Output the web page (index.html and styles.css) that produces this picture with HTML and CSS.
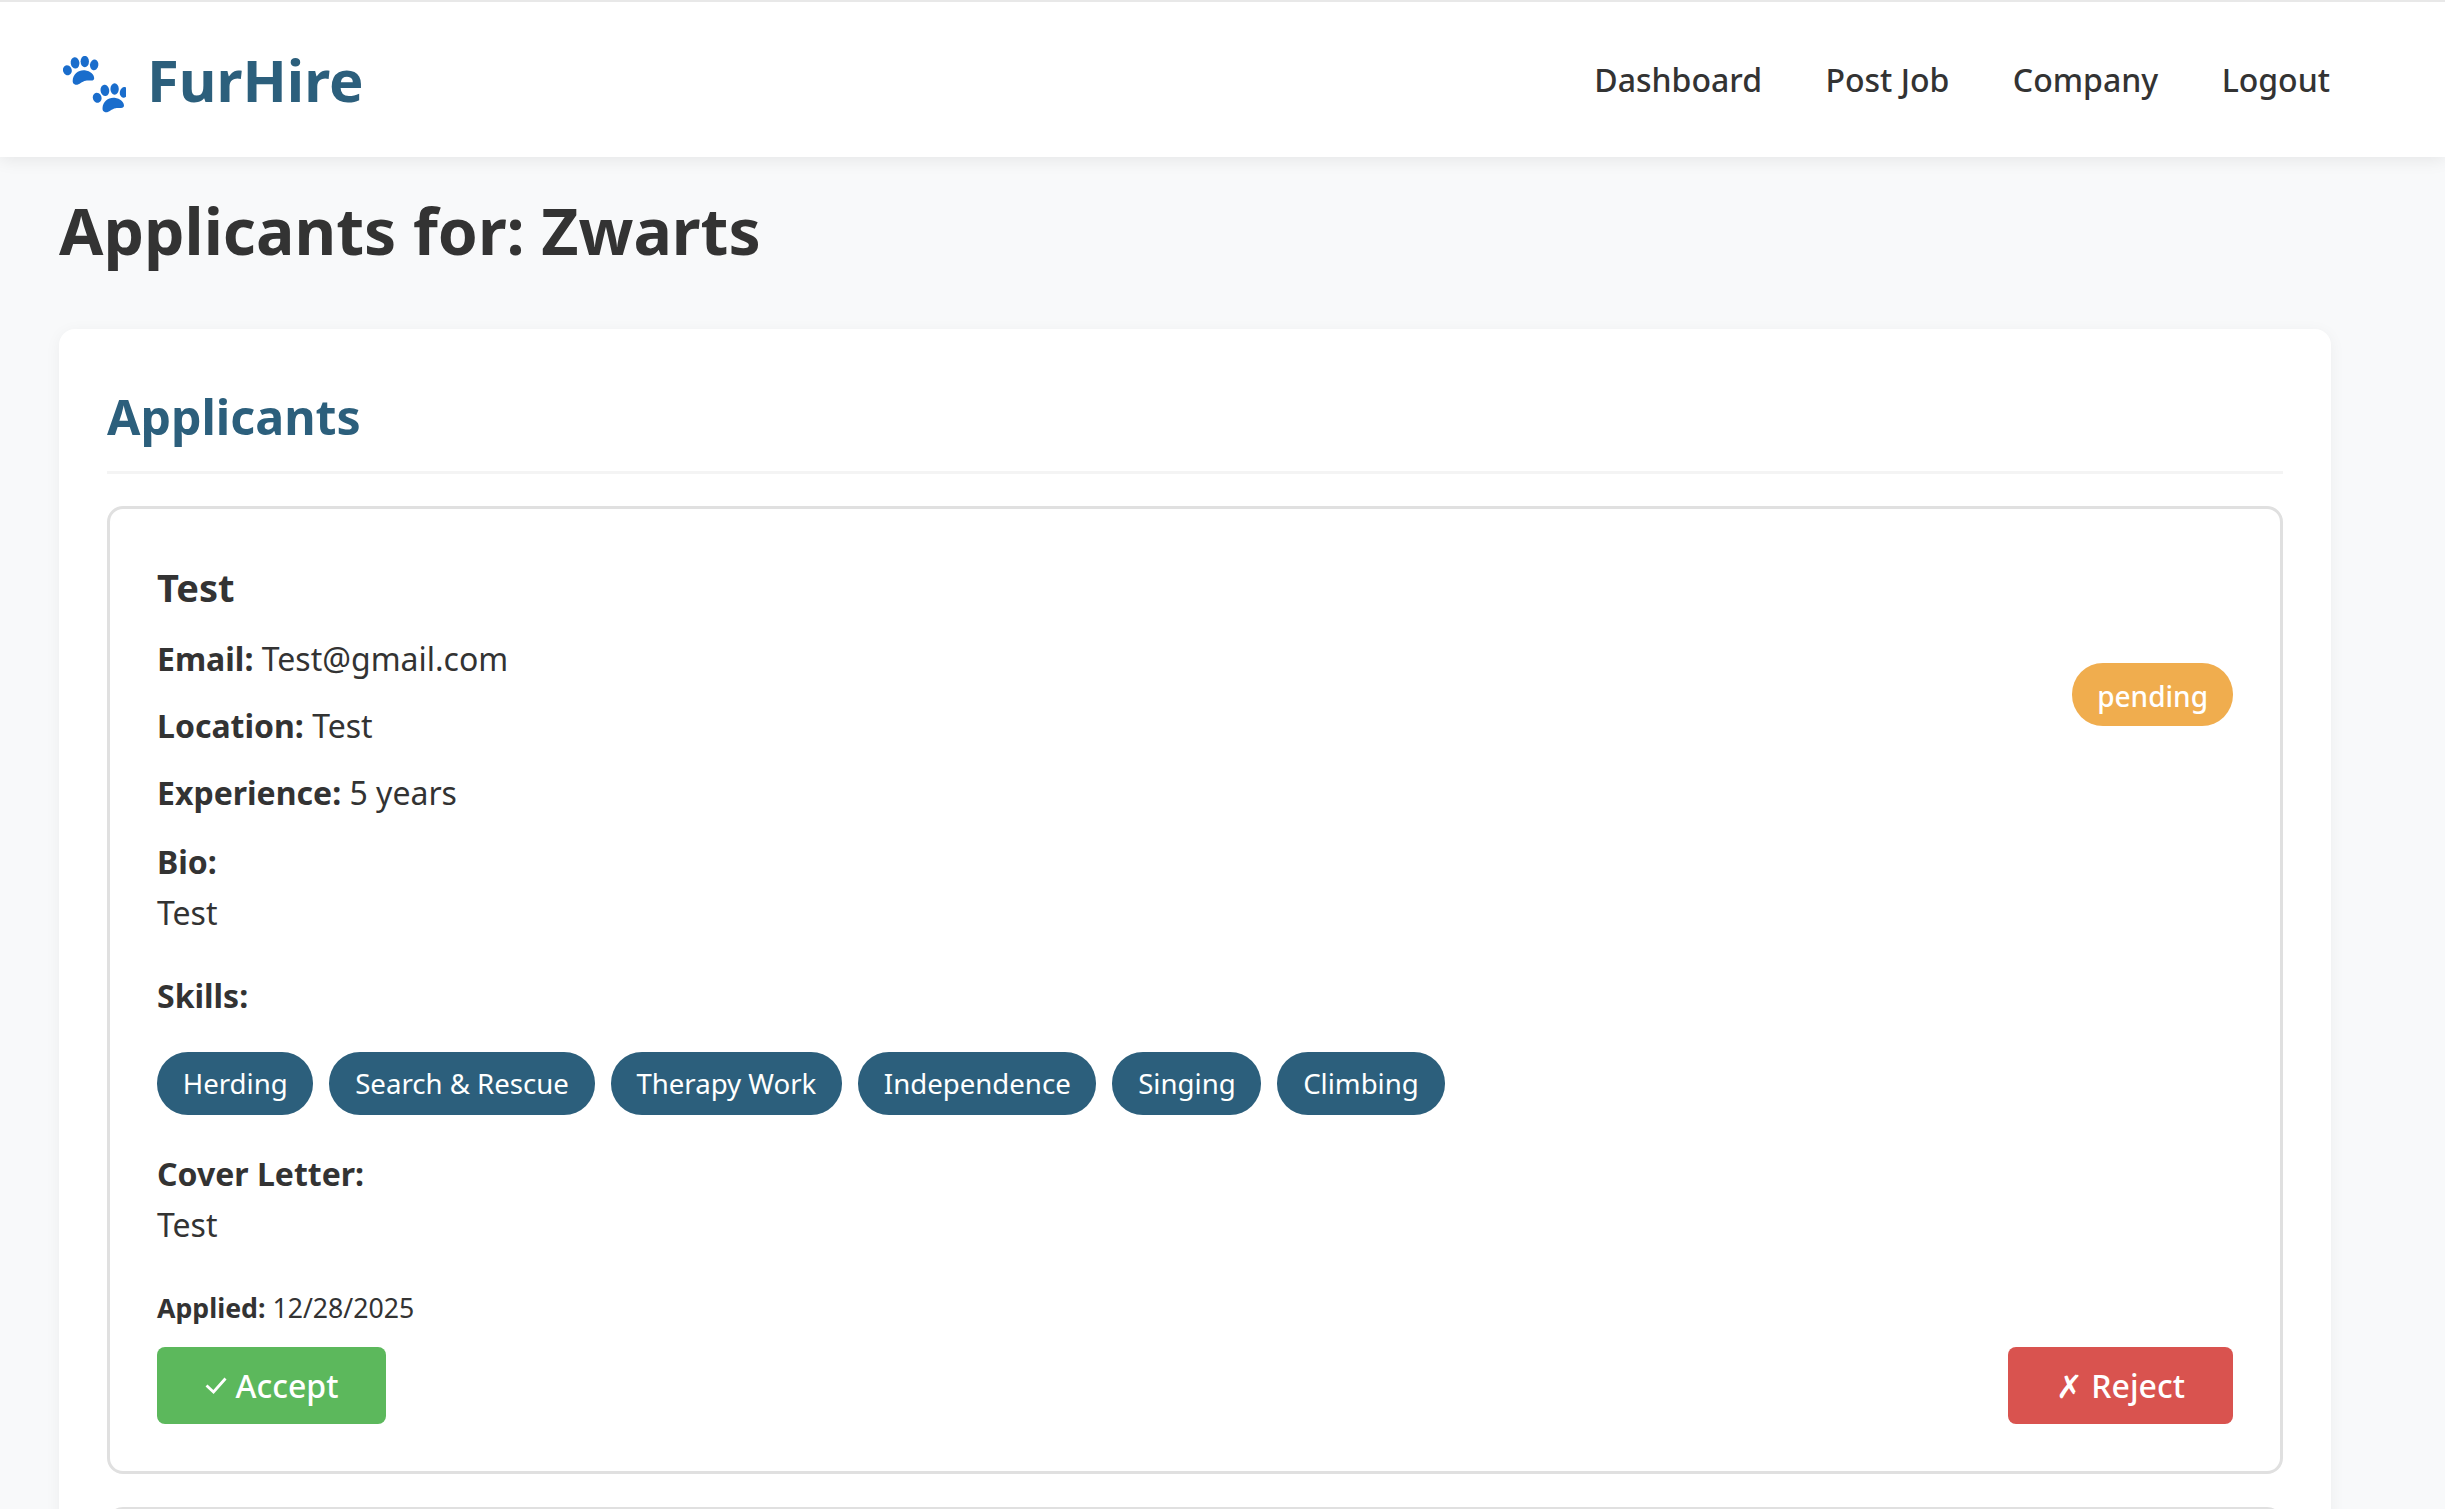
FILE: index.html
```html
<!DOCTYPE html>
<html lang="en">
<head>
<meta charset="utf-8">
<title>FurHire</title>
<link rel="stylesheet" href="styles.css">
</head>
<body>
<header class="site-header">
  <a class="logo" href="#">
    <svg class="logo-icon" viewBox="70 78 188 169" aria-hidden="true">
      <g id="paw">
        <ellipse cx="83" cy="120" rx="13" ry="15" transform="rotate(-20 83 120)"/>
        <ellipse cx="106" cy="98" rx="13" ry="17" transform="rotate(-8 106 98)"/>
        <ellipse cx="135" cy="94" rx="12.500" ry="17"/>
        <ellipse cx="163" cy="104" rx="12.500" ry="16" transform="rotate(10 163 104)"/>
        <path d="M99 150C100 130 118 118 135 120C152 122 164 134 163 145C162 153 148 150 138 151C125 153 118 165 107 163C101 162 98 157 99 150Z"/>
      </g>
      <use href="#paw" x="89" y="82"/>
    </svg>
    <span>FurHire</span>
  </a>
  <nav class="nav">
    <a href="#">Dashboard</a>
    <a href="#">Post Job</a>
    <a href="#">Company</a>
    <a href="#">Logout</a>
  </nav>
</header>
<main class="page">
  <h1 class="page-title">Applicants for: Zwarts</h1>
  <section class="panel">
    <h2 class="panel-title">Applicants</h2>
    <article class="applicant">
      <div class="applicant-top">
        <div>
          <h3 class="applicant-name">Test</h3>
          <p class="line"><strong>Email:</strong> Test@gmail.com</p>
          <p class="line"><strong>Location:</strong> Test</p>
          <p class="line line-last"><strong>Experience:</strong> 5 years</p>
        </div>
        <span class="status">pending</span>
      </div>
      <div class="block">
        <strong class="block-label">Bio:</strong>
        <p class="block-text">Test</p>
      </div>
      <div class="skills">
        <strong class="skills-label">Skills:</strong>
        <div class="tags">
          <span class="tag">Herding</span>
          <span class="tag">Search &amp; Rescue</span>
          <span class="tag">Therapy Work</span>
          <span class="tag">Independence</span>
          <span class="tag">Singing</span>
          <span class="tag">Climbing</span>
        </div>
      </div>
      <div class="block">
        <strong class="block-label">Cover Letter:</strong>
        <p class="block-text">Test</p>
      </div>
      <p class="applied"><strong>Applied:</strong> 12/28/2025</p>
      <div class="actions">
        <button class="btn btn-accept">
          <svg class="check-icon" viewBox="0 0 22 17" aria-hidden="true"><path d="M1.500 8.500L8.500 15L20.500 1.500"/></svg>
          <span>Accept</span>
        </button>
        <button class="btn btn-reject">✗ Reject</button>
      </div>
    </article>
    <article class="applicant applicant-next"></article>
  </section>
</main>
</body>
</html>
```
FILE: styles.css
```css
* { box-sizing: border-box; }
html { font-size: 25px; }
body {
  margin: 0;
  height: 100vh;
  overflow: hidden;
  background: #f8f9fa;
  color: #333;
  font-family: "Noto Sans", sans-serif;
  line-height: 1.7;
}
a { color: inherit; text-decoration: none; }
.site-header {
  height: 157px;
  display: flex;
  align-items: center;
  justify-content: space-between;
  padding: 0 115px 0 59px;
  background: #fff;
  border-top: 2px solid #e8e8e8;
  box-shadow: 0 3px 16px rgba(0, 0, 0, 0.08);
  position: relative;
}
.logo {
  display: flex;
  align-items: center;
  gap: 21px;
  padding-left: 4px;
  color: #2c5f7c;
  font-size: 58px;
  font-weight: 700;
  line-height: 1;
}
.logo-icon { width: 63px; height: 57px; margin-top: 9px; fill: #1a6dcc; }
.nav { display: flex; gap: 63.5px; font-size: 32px; font-weight: 500; line-height: 42px; padding-top: 1px; }
.nav a { color: #333; }
.page { padding: 0 114px 0 59px; }
.page-title {
  margin: 0;
  padding-top: 25px;
  font-size: 64.2px;
  font-weight: 700;
  line-height: 1.5;
}
.panel {
  margin-top: 50.5px;
  padding: 56px 48px 0;
  background: #fff;
  border-radius: 16px;
  box-shadow: 0 3px 16px rgba(0, 0, 0, 0.05);
}
.panel-title {
  margin: 0 0 31.5px;
  padding-bottom: 23.5px;
  border-bottom: 3px solid #f4f4f4;
  color: #2c5f7c;
  font-size: 48.3px;
  font-weight: 700;
  line-height: 1.3;
}
.applicant {
  margin-bottom: 33px;
  padding: 54px 47px 47px;
  border: 3px solid #e0e0e0;
  border-radius: 16px;
}
.applicant-next { height: 200px; }
.applicant-top { display: flex; justify-content: space-between; align-items: center; margin-bottom: 12px; }
.applicant-name { margin: 0 0 26.5px; font-size: 38px; font-weight: 700; line-height: 1.3; }
.line { margin: 0 0 25px; font-size: 32px; line-height: 42px; }
.line-last { margin-bottom: 15px; }
.status {
  height: 63px;
  margin-bottom: 3px;
  padding: 0 25px;
  line-height: 66px;
  border-radius: 31px;
  background: #f0ad4e;
  color: #fff;
  font-size: 28px;
  font-weight: 500;
}
.block { margin-bottom: 41px; font-size: 32px; line-height: 42px; }
.block-label { display: block; margin-bottom: 9px; }
.block-text { margin: 0; }
.skills { font-size: 32px; line-height: 42px; }
.skills-label { display: block; margin-bottom: 34.5px; }
.tags { display: flex; flex-wrap: wrap; gap: 16px; margin-bottom: 38px; }
.tag {
  height: 63px;
  padding: 0 25.75px;
  line-height: 63px;
  border-radius: 31px;
  background: #2c5f7c;
  color: #fff;
  font-size: 27.6px;
}
.applied { margin: 4.5px 0 18px; font-size: 26.7px; line-height: 42px; }
.actions { display: flex; justify-content: space-between; }
.btn {
  display: flex;
  align-items: center;
  justify-content: center;
  height: 77px;
  border: 0;
  border-radius: 8px;
  color: #fff;
  font-family: "Noto Sans", sans-serif;
  font-size: 32px;
  font-weight: 500;
}
.btn-accept { width: 229px; gap: 9px; background: #5cb85c; }
.btn-reject { width: 225px; background: #d9534f; }
.check-icon { width: 22px; height: 17px; fill: none; stroke: #fff; stroke-width: 2.800; }
```
